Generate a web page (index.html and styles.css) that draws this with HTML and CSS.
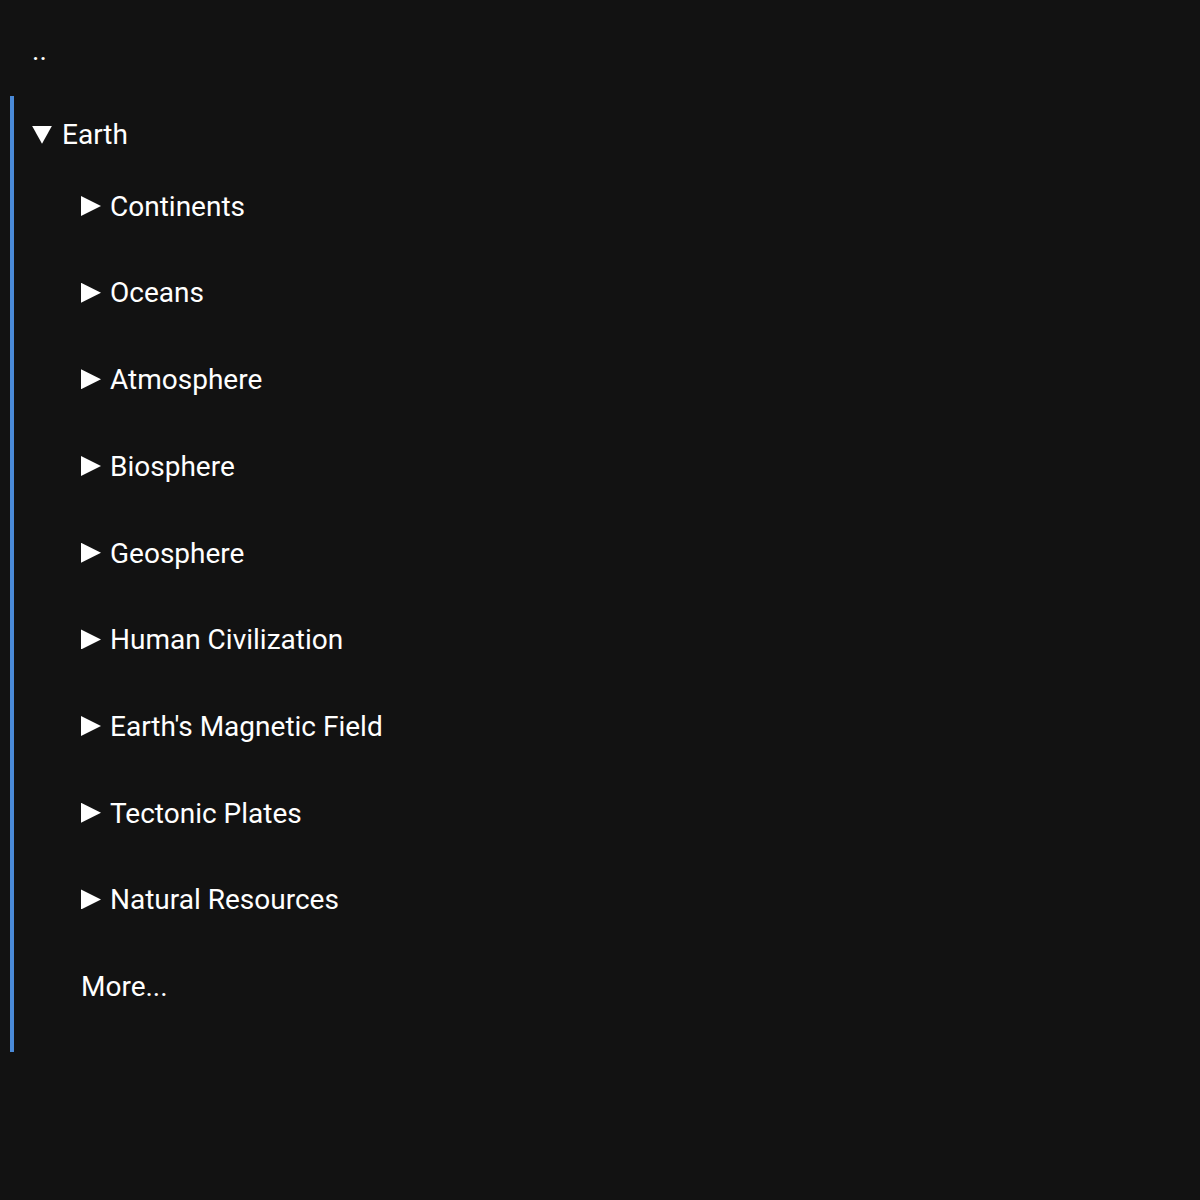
FILE: index.html
```html
<!DOCTYPE html>
<html lang="en">
<head>
<meta charset="utf-8">
<title>Earth</title>
<link rel="stylesheet" href="styles.css">
</head>
<body>
<main class="browser">
  <div class="parent-link">..</div>
  <section class="tree">
    <details class="node" open>
      <summary class="node-label">Earth</summary>
      <div class="children">
        <details class="node child"><summary class="node-label">Continents</summary></details>
        <details class="node child"><summary class="node-label">Oceans</summary></details>
        <details class="node child"><summary class="node-label">Atmosphere</summary></details>
        <details class="node child"><summary class="node-label">Biosphere</summary></details>
        <details class="node child"><summary class="node-label">Geosphere</summary></details>
        <details class="node child"><summary class="node-label">Human Civilization</summary></details>
        <details class="node child"><summary class="node-label">Earth's Magnetic Field</summary></details>
        <details class="node child"><summary class="node-label">Tectonic Plates</summary></details>
        <details class="node child"><summary class="node-label">Natural Resources</summary></details>
        <div class="more">More...</div>
      </div>
    </details>
  </section>
</main>
</body>
</html>
```
FILE: styles.css
```css
html, body {
  margin: 0;
  background: #121212;
}

body {
  color: #ffffff;
  font-family: Roboto, "Noto Sans", sans-serif;
  font-size: 28px;
  line-height: 1.3;
}

.browser {
  padding: 33px 0 0 0;
}

.parent-link {
  padding-left: 32px;
  height: 63px;
}

.tree {
  margin-left: 10px;
  border-left: 4px solid #4a8ad8;
  padding: 21px 0 47px 18px;
}

.node-label {
  display: flex;
  align-items: center;
  gap: 9px;
  list-style: none;
  cursor: pointer;
}

.node-label::-webkit-details-marker {
  display: none;
}

/* disclosure triangle: right-pointing when closed */
.node-label::before {
  content: "";
  width: 20px;
  height: 20px;
  margin-top: -2px;
  background: #ffffff;
  clip-path: polygon(0 0, 100% 50%, 0 100%);
  flex: none;
}

/* down-pointing when open */
.node[open] > .node-label::before {
  width: 20px;
  height: 18px;
  margin-top: -1px;
  margin-right: 1px;
  clip-path: polygon(0 0, 100% 0, 50% 100%);
}

.children {
  display: flex;
  flex-direction: column;
  gap: 50.3px;
  padding: 35.4px 0 0 49px;
}
```
